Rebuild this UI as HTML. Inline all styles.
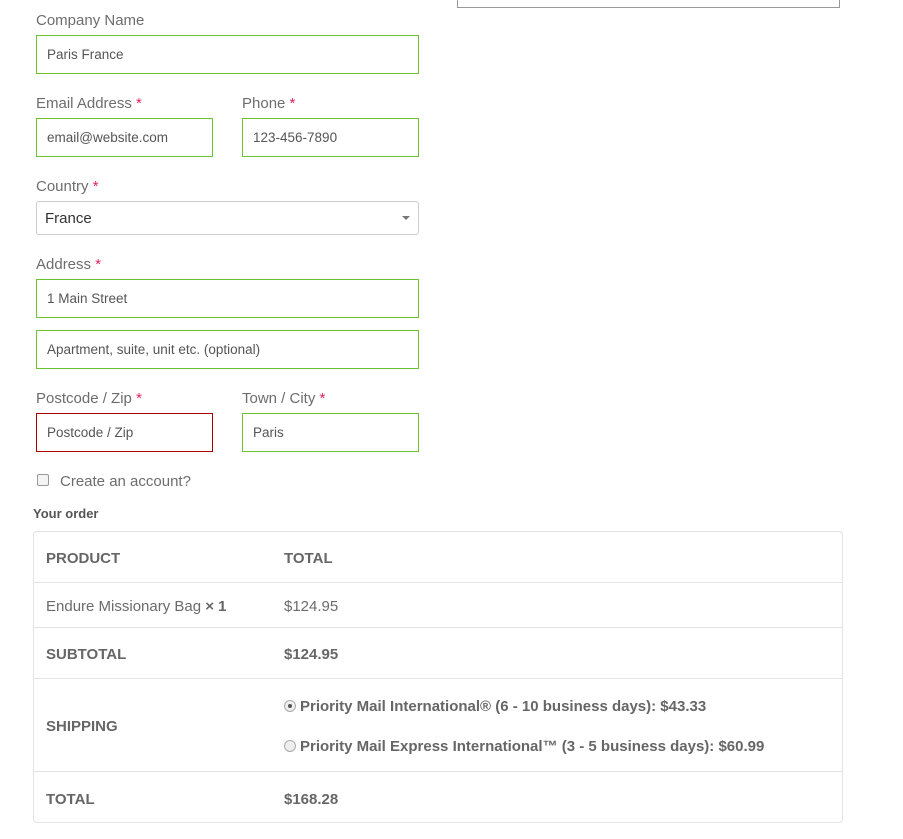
<!DOCTYPE html>
<html><head><meta charset="utf-8"><style>
*{box-sizing:border-box;margin:0;padding:0}
body{width:903px;height:839px;background:#fff;position:relative;font-family:"Liberation Sans",sans-serif;color:#6b6b6b;overflow:hidden}
.a{position:absolute}
.lbl{font-size:15px;color:#6d6d6d}
.lbl b{color:#e0245e;font-weight:normal}
.in{position:absolute;border:1px solid #6dc22f;font-size:13.5px;color:#555;padding-left:10px;display:flex;align-items:center}
.bad{border-color:#a00}
.row{position:absolute;left:34px;width:808px;border-top:1px solid #e3e3e3}
.c1{position:absolute;left:12px}
.c2{position:absolute;left:250px}
.bold{font-weight:bold;font-size:15px;color:#666}
.rad{display:inline-block;width:12px;height:12px;border:1px solid #aaa;border-radius:50%;background:#eee;vertical-align:-1px;margin-right:4px;position:relative}
</style></head><body>
<div class="a" style="left:457px;top:-2px;width:383px;height:10px;border:1px solid #999;border-top:none"></div>
<div class="a lbl" style="left:36px;top:12px">Company Name</div>
<div class="in" style="left:36px;top:35px;width:383px;height:39px">Paris France</div>
<div class="a lbl" style="left:36px;top:95px">Email Address <b>*</b></div>
<div class="a lbl" style="left:242px;top:95px">Phone <b>*</b></div>
<div class="in" style="left:36px;top:118px;width:177px;height:39px">email@website.com</div>
<div class="in" style="left:242px;top:118px;width:177px;height:39px">123-456-7890</div>
<div class="a lbl" style="left:36px;top:178px">Country <b>*</b></div>
<div class="in" style="left:36px;top:201px;width:383px;height:34px;border-color:#ccc;border-radius:3px;font-size:15px;color:#333;padding-left:8px">France<span style="position:absolute;right:8px;top:14px;border:4px solid transparent;border-top:4px solid #777"></span></div>
<div class="a lbl" style="left:36px;top:256px">Address <b>*</b></div>
<div class="in" style="left:36px;top:279px;width:383px;height:39px">1 Main Street</div>
<div class="in" style="left:36px;top:330px;width:383px;height:39px">Apartment, suite, unit etc. (optional)</div>
<div class="a lbl" style="left:36px;top:390px">Postcode / Zip <b>*</b></div>
<div class="a lbl" style="left:242px;top:390px">Town / City <b>*</b></div>
<div class="in bad" style="left:36px;top:413px;width:177px;height:39px">Postcode / Zip</div>
<div class="in" style="left:242px;top:413px;width:177px;height:39px">Paris</div>
<div class="a" style="left:37px;top:474px;width:12px;height:12px;border:1px solid #999;border-radius:2px;background:#f4f4f4"></div>
<div class="a lbl" style="left:60px;top:473px">Create an account?</div>
<div class="a" style="left:33px;top:506px;font-size:13px;font-weight:bold;color:#555">Your order</div>
<div class="a" style="left:33px;top:531px;width:810px;height:292px;border:1px solid #e3e3e3;border-radius:4px"></div>
<div class="a bold" style="left:46px;top:550px">PRODUCT</div>
<div class="a bold" style="left:284px;top:550px">TOTAL</div>
<div class="row" style="top:582px;height:45px"><span class="c1" style="top:15px;font-size:15px">Endure Missionary Bag <b style="color:#666">× 1</b></span><span class="c2" style="top:15px;font-size:15px">$124.95</span></div>
<div class="row" style="top:627px;height:51px"><span class="c1 bold" style="top:18px">SUBTOTAL</span><span class="c2 bold" style="top:18px">$124.95</span></div>
<div class="row" style="top:678px;height:93px"><span class="c1 bold" style="top:39px">SHIPPING</span>
<span class="c2 bold" style="top:19px"><span class="rad"><span style="position:absolute;left:3px;top:3px;width:4px;height:4px;border-radius:50%;background:#555"></span></span>Priority Mail International® (6 - 10 business days): $43.33</span>
<span class="c2 bold" style="top:59px"><span class="rad"></span>Priority Mail Express International™ (3 - 5 business days): $60.99</span></div>
<div class="row" style="top:771px;height:51px"><span class="c1 bold" style="top:19px">TOTAL</span><span class="c2 bold" style="top:19px">$168.28</span></div>
</body></html>
